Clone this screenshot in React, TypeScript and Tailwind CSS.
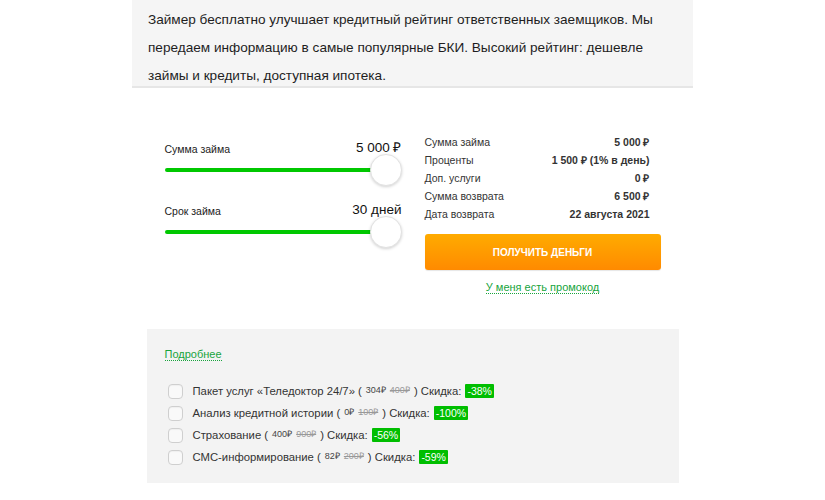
const rows = [
  ["Сумма займа", "5 000 ₽"],
  ["Проценты", "1 500 ₽ (1% в день)"],
  ["Доп. услуги", "0 ₽"],
  ["Сумма возврата", "6 500 ₽"],
  ["Дата возврата", "22 августа 2021"],
];

const services = [
  { name: "Пакет услуг «Теледоктор 24/7»", price: "304₽", old: "400₽", off: "-38%" },
  { name: "Анализ кредитной истории", price: "0₽", old: "100₽", off: "-100%" },
  { name: "Страхование", price: "400₽", old: "900₽", off: "-56%" },
  { name: "СМС-информирование", price: "82₽", old: "200₽", off: "-59%" },
];

function Slider({ label, value }: { label: string; value: string }) {
  return (
    <div>
      <div className="flex items-end justify-between h-[18px]">
        <span className="text-[10.5px] leading-[13px] text-[#222]">{label}</span>
        <span className="text-[13.5px] leading-[16px] text-[#111]">{value}</span>
      </div>
      {/* track + thumb */}
      <div className="flex items-center h-8 -mt-[2px]">
        <div className="flex-1 h-[4px] rounded-full bg-[#00c800]" />
        <div className="w-8 h-8 -ml-4 rounded-full bg-white border border-[#e2e2e2] shadow-[0_1px_3px_rgba(0,0,0,0.18)]" />
      </div>
    </div>
  );
}

function App() {
  return (
    <div className="min-h-[500px] bg-white font-['Liberation_Sans',Arial,sans-serif] text-[#333]">
      {/* Intro */}
      <div className="mx-auto w-[561px] h-[88px] bg-[#f5f5f5] border-b-2 border-[#e6e6e6] pl-4 pt-[6px] text-[13.6px] leading-[28px] text-[#1e1e1e] whitespace-nowrap">
        Займер бесплатно улучшает кредитный рейтинг ответственных заемщиков. Мы
        <br />
        передаем информацию в самые популярные БКИ. Высокий рейтинг: дешевле
        <br />
        займы и кредиты, доступная ипотека.
      </div>

      {/* Calculator */}
      <div className="mx-auto w-[496px] flex gap-[23px] pt-[46px]">
        <div className="w-[237px] flex flex-col gap-[14px] pt-1">
          <Slider label="Сумма займа" value="5 000 ₽" />
          <Slider label="Срок займа" value="30 дней" />
        </div>

        <div className="w-[236px] flex flex-col">
          {rows.map(([k, v]) => (
            <div key={k} className="flex justify-between h-[18px] items-center pr-[11px] text-[10.5px]">
              <span className="text-[#333]">{k}</span>
              <span className="font-bold text-[#333]">{v}</span>
            </div>
          ))}
          <button className="mt-[10px] h-9 w-full rounded-[3px] bg-gradient-to-b from-[#ffab00] to-[#ff8a00] text-white text-[10px] font-bold uppercase shadow-[0_1px_1px_rgba(0,0,0,0.1)]">
            Получить деньги
          </button>
          <div className="mt-[10px] text-center text-[11px] leading-[14px]">
            <span className="text-[#17a43c] border-b border-dotted border-[#17a43c]">
              У меня есть промокод
            </span>
          </div>
        </div>
      </div>

      {/* Extra services */}
      <div className="mx-auto mt-[35px] w-[532px] bg-[#f3f3f3] px-[18px] pt-3 pb-[15px]">
        <span className="text-[11px] leading-[16px] text-[#17a43c] border-b border-dotted border-[#17a43c]">
          Подробнее
        </span>
        <div className="mt-[15px] flex flex-col">
          {services.map((s) => (
            <div key={s.name} className="flex items-center h-[22px] pl-[3px] text-[11.3px] text-[#333] whitespace-nowrap">
              <div className="w-[15px] h-[15px] rounded-[4px] border border-[#cfcfcf] bg-[#f9f9f9] shadow-[inset_0_1px_1px_rgba(0,0,0,0.04)] mr-[10px]" />
              <span>{s.name} (</span>
              <span className="ml-1 text-[9px] text-[#444]">{s.price}</span>
              <span className="ml-1 text-[9px] text-[#999] line-through">{s.old}</span>
              <span className="ml-1">) Скидка:</span>
              <span className="ml-1 bg-[#00be00] text-white text-[10.5px] leading-[12px] px-[2px] py-[1px] rounded-[1px]">
                {s.off}
              </span>
            </div>
          ))}
        </div>
      </div>
    </div>
  );
}

export default App;
